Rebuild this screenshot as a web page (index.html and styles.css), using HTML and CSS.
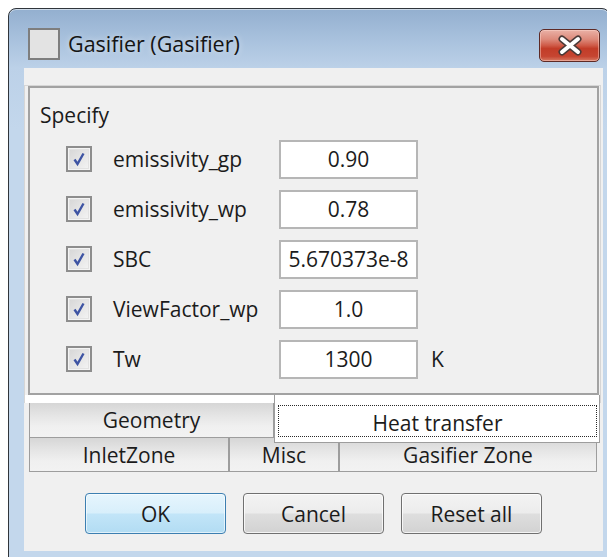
FILE: index.html
```html
<!DOCTYPE html>
<html lang="en">
<head>
<meta charset="utf-8">
<title>Gasifier (Gasifier)</title>
<link rel="stylesheet" href="styles.css">
</head>
<body>
<div class="window">
  <div class="titlebar">
    <span class="app-icon"></span>
    <span class="title">Gasifier (Gasifier)</span>
    <button class="close" type="button" aria-label="Close">
      <svg width="61" height="33" viewBox="0 0 61 33">
        <path d="M23 10 L39 23 M39 10 L23 23" stroke="#4b3a38" stroke-width="7" stroke-linecap="round" fill="none"/>
        <path d="M23 10 L39 23 M39 10 L23 23" stroke="#ffffff" stroke-width="4" stroke-linecap="round" fill="none"/>
      </svg>
    </button>
  </div>

  <div class="client">
    <div class="pane">
      <div class="group">
        <div class="group-title">Specify</div>
        <div class="rows">
          <div class="row">
            <span class="check"><svg width="18" height="18" viewBox="0 0 18 18"><path d="M4.5 9.5 L7.5 14 L13.5 3.5" stroke="#3e54a3" stroke-width="2.4" fill="none"/></svg></span>
            <span class="label">emissivity_gp</span>
            <span class="field">0.90</span>
          </div>
          <div class="row">
            <span class="check"><svg width="18" height="18" viewBox="0 0 18 18"><path d="M4.5 9.5 L7.5 14 L13.5 3.5" stroke="#3e54a3" stroke-width="2.4" fill="none"/></svg></span>
            <span class="label">emissivity_wp</span>
            <span class="field">0.78</span>
          </div>
          <div class="row">
            <span class="check"><svg width="18" height="18" viewBox="0 0 18 18"><path d="M4.5 9.5 L7.5 14 L13.5 3.5" stroke="#3e54a3" stroke-width="2.4" fill="none"/></svg></span>
            <span class="label">SBC</span>
            <span class="field">5.670373e-8</span>
          </div>
          <div class="row">
            <span class="check"><svg width="18" height="18" viewBox="0 0 18 18"><path d="M4.5 9.5 L7.5 14 L13.5 3.5" stroke="#3e54a3" stroke-width="2.4" fill="none"/></svg></span>
            <span class="label">ViewFactor_wp</span>
            <span class="field">1.0</span>
          </div>
          <div class="row">
            <span class="check"><svg width="18" height="18" viewBox="0 0 18 18"><path d="M4.5 9.5 L7.5 14 L13.5 3.5" stroke="#3e54a3" stroke-width="2.4" fill="none"/></svg></span>
            <span class="label">Tw</span>
            <span class="field">1300</span>
            <span class="unit">K</span>
          </div>
        </div>
      </div>
      <div class="pane-foot"></div>
    </div>

    <div class="tabbar">
      <div class="tab-row">
        <div class="tab tab-geometry">Geometry</div>
        <div class="tab tab-current"><span class="focus">Heat transfer</span></div>
      </div>
      <div class="tab-row">
        <div class="tab tab-inlet">InletZone</div>
        <div class="tab tab-misc">Misc</div>
        <div class="tab tab-zone">Gasifier Zone</div>
      </div>
    </div>

    <div class="buttons">
      <button class="btn btn-default" type="button">OK</button>
      <button class="btn" type="button">Cancel</button>
      <button class="btn" type="button">Reset all</button>
    </div>
  </div>
</div>
</body>
</html>
```

FILE: styles.css
```css
* {
  box-sizing: border-box;
}

html,
body {
  margin: 0;
}

body {
  height: 557px;
  overflow: hidden;
  background: #ffffff;
  font-family: "Open Sans", "Noto Sans", sans-serif;
  font-size: 21px;
  color: #1b1b1b;
}

/* Aero-style window frame */
.window {
  margin: 8px 0 0 8px;
  width: 602px;
  height: 562px;
  border: 1px solid #30353b;
  border-radius: 8px 8px 0 0;
  background: linear-gradient(180deg, #93afcf 0px, #a8c1dd 30px, #bcd1e8 59px, #c3d7ec 120px, #c3d7ec 100%);
  box-shadow: inset 0 1px 0 rgba(255, 255, 255, 0.55);
}

.titlebar {
  display: flex;
  align-items: flex-start;
  height: 59px;
  padding: 19px 9px 0 19px;
}

.app-icon {
  width: 32px;
  height: 32px;
  background: #e3e3e3;
  border: 2px solid #7e7e7e;
}

.title {
  margin-left: 8px;
  line-height: 32px;
  font-size: 21.5px;
  color: #141414;
  text-shadow: 0 0 6px rgba(255, 255, 255, 0.6);
}

.close {
  margin: 1px 0 0 auto;
  width: 61px;
  height: 33px;
  padding: 0;
  border: 1px solid #5e2a25;
  border-radius: 5px;
  background: linear-gradient(180deg, #eab1a6 0%, #dd8a7b 30%, #cf5a47 50%, #c23c28 60%, #c64531 85%, #d77a63 100%);
  box-shadow: inset 0 0 0 1px rgba(255, 220, 210, 0.45);
  display: block;
}

.close svg {
  display: block;
  margin: -1px;
}

/* client area */
.client {
  margin-left: 15px;
  width: 579px;
  height: 483px;
  padding-top: 17px;
  background: #f0f0f0;
}

.pane {
  margin-right: 2px;
  border: 1px solid #d6d6d6;
  border-bottom: 0;
  padding: 0 1px 0 3px;
}

.group {
  border: 2px solid #a2a2a2;
  padding: 15px 0 9px 10px;
}

.group-title {
  line-height: 24px;
}

.rows {
  margin-top: 7px;
  padding-left: 26px;
}

.row {
  display: flex;
  align-items: center;
  height: 50px;
}

.check {
  flex: none;
  width: 26px;
  height: 26px;
  border: 2px solid #8d8d8d;
  padding: 2px;
  background: #f4f4f4;
}

.check svg {
  display: block;
  width: 18px;
  height: 18px;
  background: linear-gradient(135deg, #d8d8d8, #f2f2f2);
  outline: 1px solid #e2e2e2;
}

.label {
  flex: none;
  width: 166px;
  margin-left: 21px;
  line-height: 24px;
}

.field {
  flex: none;
  width: 139px;
  height: 39px;
  border: 2px solid #b6b6b6;
  background: #ffffff;
  text-align: center;
  line-height: 35px;
  white-space: nowrap;
}

.unit {
  margin-left: 13px;
}

.pane-foot {
  height: 8px;
  margin: 0 -1px 0 -3px;
  background: #ffffff;
}

/* tabs sit below the page area */
.tabbar {
  padding-left: 5px;
}

.tab-row {
  display: flex;
}

.tab {
  display: flex;
  align-items: center;
  justify-content: center;
  border: 1px solid #9d9d9d;
  border-top: 0;
  background: linear-gradient(180deg, #d6d6d6 0%, #e6e6e6 40%, #f0f0f0 70%, #f2f2f2 100%);
  line-height: 24px;
  white-space: nowrap;
}

.tab-geometry {
  width: 245px;
  height: 35px;
}

.tab-current {
  position: relative;
  z-index: 1;
  width: 326px;
  height: 48px;
  margin: -8px 0 -5px 0;
  padding: 10px 2px 5px 3px;
  background: #ffffff;
  align-items: stretch;
}

.focus {
  flex: 1;
  display: flex;
  align-items: center;
  justify-content: center;
  padding-top: 3px;
  border: 1px dotted #2a2a2a;
}

.tab-inlet,
.tab-misc,
.tab-zone {
  height: 34px;
}

.tab-inlet {
  width: 200px;
}

.tab-misc {
  width: 110px;
}

.tab-zone {
  width: 258px;
}

/* dialog buttons */
.buttons {
  display: flex;
  gap: 17px;
  margin: 21px 0 0 61px;
}

.btn {
  width: 141px;
  height: 41px;
  padding: 0;
  border: 1px solid #707070;
  border-radius: 4px;
  background: linear-gradient(180deg, #f3f3f3 0%, #ececec 48%, #dedede 52%, #d2d2d2 100%);
  box-shadow: inset 0 0 0 1px rgba(255, 255, 255, 0.75);
  font-family: inherit;
  font-size: 21px;
  color: #1b1b1b;
  line-height: 24px;
}

.btn-default {
  border-color: #3c7fb1;
  background: linear-gradient(180deg, #e6f5fd 0%, #d8effb 48%, #c2e5f8 52%, #b2dcf3 100%);
  box-shadow: inset 0 0 0 1px rgba(255, 255, 255, 0.6);
}
```
